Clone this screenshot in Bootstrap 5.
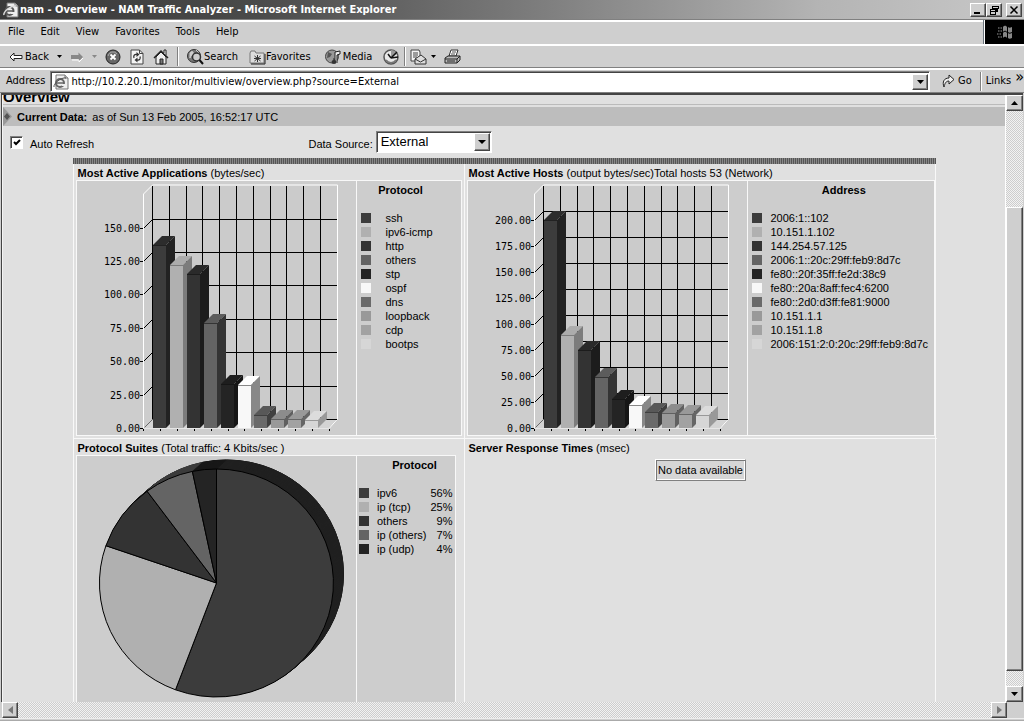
<!DOCTYPE html>
<html lang="en">
<head>
<meta charset="utf-8">
<meta name="viewport" content="width=device-width, initial-scale=1">
<title>nam - Overview - NAM Traffic Analyzer</title>
<link href="https://cdn.jsdelivr.net/npm/bootstrap@5.3.0/dist/css/bootstrap.min.css" rel="stylesheet">
<style>
:root{--face:#cfcfcf;--page:#e0e0e0;--panel:#cdcdcd;--dark:#444;--mid:#808080}
body{font:11px/14px "Liberation Sans",Arial,sans-serif;color:#000;background:var(--face)}
.chrome{font-family:"DejaVu Sans Condensed","DejaVu Sans",sans-serif}
svg{display:block;flex:none}
button,input,select{font:inherit;color:inherit}
.titlebar{height:19px;background:linear-gradient(90deg,#383838,#4a4a4a 25%,#787878 50%,#b4b4b4 80%,#c8c8c8);padding:0 2px 0 3px}
.caption-text{font-weight:700;color:#fff;padding-left:1px}
.raised{background:var(--face);border:1px solid;border-color:#fff var(--dark) var(--dark) #fff;box-shadow:inset -1px -1px 0 var(--mid);padding:0;display:flex;align-items:center;justify-content:center;border-radius:0;flex:none}
.winbtn{width:16px;height:14px}
.strip{border-top:2px solid #fff;border-bottom:1px solid var(--mid)}
.menustrip{height:25px;border-top:1px solid var(--mid);box-shadow:inset 0 2px 0 #fff}
.menustrip a{color:#000;text-decoration:none;padding:0 8px}
.throbber{width:40px;background:#000;border-left:1px solid #fff}
.toolstrip{height:24px;padding-left:5px}
.tool{border:0;background:none;padding:0 4px;height:18px;display:flex;align-items:center;gap:2px;flex:none}
.tool.wide{padding:0 7px}
.tool.snug{gap:0}
.vsep{width:2px;height:19px;background:var(--mid);border-right:1px solid #fff;flex:none}
.addrstrip{height:25px}
.addrstrip label{padding:0 5px 0 6px}
.sunken{background:#fff;border:1px solid;border-color:var(--mid) #fff #fff var(--mid);box-shadow:inset 1px 1px 0 var(--dark)}
.addrbox{height:21px;padding:2px 1px 1px 2px}
.addrbox input{border:0;outline:0;background:none;padding:0 2px;min-width:0}
.viewport{border-top:2px solid var(--dark);border-left:1px solid var(--dark);margin:0 1px}
.doc{background:var(--page);border-left:1px solid #f4f4f4;border-right:1px solid #fff}
.pagehead{font-size:15px;line-height:15px;font-weight:700;margin:-6px 0 0 0;border-bottom:1px solid #bbb;height:16px}
.databar{background:#bdbdbd;height:19px;margin-top:2px;gap:5px}
.controls{height:32px;padding-left:7px}
.controls .refresh{width:30%;gap:7px}
.controls label{padding:4px 3px 0 0}
.tick{appearance:none;width:13px;height:13px;margin:0;border-radius:0}
.tick:checked{background:#fff url("data:image/svg+xml,%3Csvg xmlns='http://www.w3.org/2000/svg' viewBox='0 0 11 11'%3E%3Cpath d='M3 5l2 2 4-4' fill='none' stroke='black' stroke-width='2'/%3E%3C/svg%3E") center/11px}
.source{position:relative;width:116px}
.source select{appearance:none;width:100%;height:22px;padding:0 20px 0 4px;font-size:13px;border-radius:0;outline:0}
.source .raised{position:absolute;right:2px;top:2px;bottom:2px;width:16px;pointer-events:none}
.board{max-width:863px}
.stripes{height:6px;background:repeating-linear-gradient(90deg,#555 0 1px,#888 1px 2px)}
.cells{display:grid;grid-template-columns:391fr 472fr;border-right:1px solid #f8f8f8}
.cell{border-left:1px solid #f8f8f8;padding:0 2px 2px}
.cell.upper{border-bottom:1px solid #f8f8f8}
.cell h2{font-size:11px;line-height:16px;margin:0;padding:1px 0 0 2px;height:16px;font-weight:400;white-space:nowrap}
.plate{background:var(--panel);border:1px solid #f8f8f8}
.plot{border-right:1px solid #f8f8f8;flex:1 1 auto}
.keybox{flex:none;padding-left:4px}
.keybox.apps{width:104px}
.keybox.hosts{width:186px}
.keybox.suites{width:98px;padding:0 2px}
.legend td{height:14px;line-height:14px;padding:0;white-space:nowrap}
.legend th{height:30px;padding:2px 0 0 8px;vertical-align:top;text-align:center;line-height:14px}
.legend.shares th{padding-left:18px}
.swatch{width:10px;height:10px;display:block}
.nodata{border:1px solid;border-color:#fff var(--mid) var(--mid) #fff;box-shadow:inset 1px 1px 0 #777,inset -1px -1px 0 #fff;background:#d6d6d6;padding:3px 2px 3px 2px}
.trough{background:repeating-conic-gradient(#cdcdcd 0 25%,#f2f2f2 0 50%) 0 0/2px 2px}
.vbar{width:17px}.vbar .raised{height:16px}
.vbar .thumb{height:auto;flex:464 1 0}
.hbar{height:16px;margin-left:2px}.hbar .raised{width:16px}
.hbar .corner{width:17px}
.statusedge{height:3px;border-top:1px solid #eee;border-bottom:1px solid #aaa}
.axis{font:10px "DejaVu Sans Mono",monospace;text-anchor:end}
</style>
</head>
<body>
<div class="d-flex flex-column vh-100 overflow-hidden">
<header class="chrome">
  <div class="titlebar d-flex align-items-center">
    <svg width="16" height="16" viewBox="0 0 16 16"><path d="M4 1h8l3 3v11H4z" fill="#eee" stroke="#777"/><path d="M12 1v3h3" fill="#ccc" stroke="#777"/><circle cx="6.500" cy="9" r="4" fill="none" stroke="#555" stroke-width="2"/><path d="M3 9h8" stroke="#555" stroke-width="1.500"/><path d="M8 11h4" stroke="#eee" stroke-width="2"/><path d="M1 13C0 10 8 3 13 4" fill="none" stroke="#ddd" stroke-width="1.500"/></svg>
    <span class="caption-text flex-grow-1 text-nowrap overflow-hidden lh-sm">nam - Overview - NAM Traffic Analyzer - Microsoft Internet Explorer</span>
    <button class="raised winbtn" aria-label="Minimize"><svg width="10" height="10"><path d="M1 8h6" stroke="#000" stroke-width="2"/></svg></button>
    <button class="raised winbtn" aria-label="Restore"><svg width="10" height="10" shape-rendering="crispEdges"><path d="M3 1h6v2H3zM3 1v3M8.500 3v3H7M1 4h6v2H1zM1.500 5v4h5V5" fill="none" stroke="#000"/></svg></button>
    <button class="raised winbtn ms-1" aria-label="Close"><svg width="10" height="10"><path d="M1.500 1.500l7 7M8.500 1.500l-7 7" stroke="#000" stroke-width="1.500"/></svg></button>
  </div>
  <nav class="menustrip d-flex">
    <div class="d-flex align-items-center flex-grow-1 border-end border-secondary"><a href="#">File</a><a href="#">Edit</a><a href="#">View</a><a href="#">Favorites</a><a href="#">Tools</a><a href="#">Help</a></div>
    <div class="throbber d-flex align-items-center justify-content-center"><svg width="18" height="16" viewBox="0 0 18 16"><path d="M7 3c2-2 3-1 4 0v5c-1-1-2-2-4 0zM12 3c1 1 2 1 4 0v5c-2 1-3 1-4 0zM7 9c2-2 3-1 4 0v5c-1-1-2-2-4 0zM12 9c1 1 2 1 4 0v5c-2 1-3 1-4 0z" fill="#888"/><path d="M2 4h4M2 7h4M1 10h5M2 13h4" stroke="#666" stroke-width="1.500" stroke-dasharray="1.500 1"/></svg></div>
  </nav>
  <div class="strip toolstrip d-flex align-items-center">
    <button class="tool"><svg width="14" height="12" viewBox="0 0 14 12"><path d="M1 6l4-4v2.500h8v3H5V10z" fill="#fff" stroke="#222"/></svg>Back</button>
    <button class="tool" aria-label="Back list"><svg width="5" height="3"><path d="M0 0h5L2.500 3z"/></svg></button>
    <button class="tool" aria-label="Forward"><svg width="14" height="12" viewBox="0 0 14 12"><path d="M13 6L8.500 1.500V4H1v4h7.500v2.500z" fill="#888"/><path d="M2 9h7v2l4-4" fill="none" stroke="#fff"/></svg></button>
    <button class="tool" aria-label="Forward list"><svg width="5" height="3"><path d="M0 0h5L2.500 3z" fill="#888"/></svg></button>
    <button class="tool" aria-label="Stop"><svg width="16" height="16" viewBox="0 0 16 16"><circle cx="8" cy="8" r="7" fill="#666" stroke="#222"/><path d="M3 7a5 5 0 0 1 9-2" stroke="#aaa" fill="none"/><path d="M5.500 5.500l5 5M10.500 5.500l-5 5" stroke="#fff" stroke-width="1.800"/></svg></button>
    <button class="tool" aria-label="Refresh"><svg width="16" height="16" viewBox="0 0 16 16"><path d="M2 1h8.500L14 4.500V15H2z" fill="#f4f4f4" stroke="#444"/><path d="M10.500 1v3.500H14" fill="none" stroke="#444"/><path d="M5 9c-1-3 1-4 3-3.500M11 7.500c1 3-1 4-3 3.500" fill="none" stroke="#333" stroke-width="1.300"/><path d="M7.500 3l3 2.500-3 2.500zM8.500 8.500L5.500 11l3 2.500z" fill="#333"/></svg></button>
    <button class="tool" aria-label="Home"><svg width="16" height="16" viewBox="0 0 16 16"><path d="M3 8v7h10V8L8 3z" fill="#eee" stroke="#222"/><path d="M1 9l7-7 7 7" fill="none" stroke="#222" stroke-width="1.500"/><path d="M11 4V1h2v5" fill="#fff" stroke="#222"/><path d="M7 10h3v5H7z" fill="#777" stroke="#222"/></svg></button>
    <div class="vsep mx-1"></div>
    <button class="tool snug"><svg width="17" height="16" viewBox="0 0 17 16"><circle cx="7" cy="7" r="6.500" fill="#777" stroke="#333"/><path d="M3 4c2-3 4-1 3 1s-3 2-3 4zM9 1l3 3" fill="#ccc" stroke="#ccc"/><circle cx="9.500" cy="8" r="4" fill="#ccc" stroke="#333" stroke-width="1.500"/><path d="M12.500 11l3.500 4" stroke="#111" stroke-width="2"/></svg>Search</button>
    <button class="tool wide snug"><svg width="17" height="16" viewBox="0 0 17 16"><path d="M1 14V4l1-2h4l1 2h8v10z" fill="#ddd" stroke="#777"/><path d="M2 15h14V5" fill="none" stroke="#222"/><path d="M8.500 6v7M5.500 7l6 5M11.500 7l-6 5M5 9.500h7" stroke="#333"/></svg>Favorites</button>
    <button class="tool wide snug"><svg width="18" height="16" viewBox="0 0 18 16"><circle cx="7" cy="7.500" r="6.500" fill="#999" stroke="#444"/><path d="M3 3l4 2-2 3-3 1zM8 9l3 1-3 4z" fill="#555"/><path d="M10 13V3l5-1v3l-3 1v8" fill="#eee" stroke="#222"/><ellipse cx="9" cy="13" rx="2.500" ry="2" fill="#333"/></svg>Media</button>
    <button class="tool" aria-label="History"><svg width="17" height="16" viewBox="0 0 17 16"><circle cx="8" cy="8" r="7" fill="#e8e8e8" stroke="#555" stroke-width="1.500"/><path d="M8 8V1a7 7 0 0 1 6 4z" fill="#999"/><path d="M8 9l6-6M8 9l7-1M8 9l-3-4" stroke="#111" stroke-width="1.500"/><path d="M3 11a6 6 0 0 0 10 0" stroke="#777" stroke-width="1.500" fill="none"/></svg></button>
    <div class="vsep"></div>
    <button class="tool" aria-label="Mail"><svg width="17" height="16" viewBox="0 0 17 16"><path d="M1 1h8l1 2v9H1z" fill="#f2f2f2" stroke="#444"/><path d="M3 4h5M3 6h5M3 8h4" stroke="#444"/><path d="M5 10l6-4 5 4v5H5z" fill="#ddd" stroke="#333"/><path d="M5 10l5.500 3L16 10" fill="none" stroke="#333"/></svg></button>
    <button class="tool ps-0" aria-label="Mail list"><svg width="5" height="3"><path d="M0 0h5L2.500 3z"/></svg></button>
    <button class="tool" aria-label="Print"><svg width="17" height="16" viewBox="0 0 17 16"><path d="M5 7l2-6h7l-2 6z" fill="#fff" stroke="#333"/><path d="M8 3h4M7 5h4" stroke="#555"/><path d="M1 9l3-2h12v4l-3 3H1z" fill="#bbb" stroke="#222"/><path d="M1 10h12v4M13 10l3-3M3 12h8" fill="none" stroke="#222"/></svg></button>
  </div>
  <div class="strip addrstrip d-flex align-items-center">
    <label for="address">Address</label>
    <div class="sunken addrbox d-flex align-items-center flex-grow-1">
      <svg width="16" height="16" viewBox="0 0 16 16"><path d="M3 1h9l3 3v11H3z" fill="#eee" stroke="#777"/><path d="M12 1v3h3" fill="#ccc" stroke="#777"/><circle cx="7" cy="9" r="4" fill="none" stroke="#666" stroke-width="2"/><path d="M4 9h7" stroke="#666" stroke-width="1.500"/><path d="M9 11h3" stroke="#eee" stroke-width="2"/><path d="M1 13C0 10 8 3 13 4" fill="none" stroke="#555"/></svg>
      <input id="address" class="flex-grow-1" type="text" value="http://10.2.20.1/monitor/multiview/overview.php?source=External">
      <button class="raised winbtn h-100" aria-label="Show addresses"><svg width="7" height="4"><path d="M0 0h7L3.500 4z"/></svg></button>
    </div>
    <button class="tool px-2 ms-1"><svg width="14" height="16" viewBox="0 0 14 16"><path d="M2 14c-2-5 0-9 5-9V2l5 4.500L7 11V8c-3 0-4 2-5 6z" fill="#eee" stroke="#222"/></svg>Go</button>
    <div class="vsep"></div>
    <a href="#" class="text-black text-decoration-none ps-1">Links</a><span class="fs-6 lh-1 ps-1 pb-2">»</span>
  </div>
</header>

<div class="viewport d-flex flex-grow-1 overflow-hidden">
  <main class="doc flex-grow-1 overflow-hidden">
    <h1 class="pagehead">Overview</h1>
    <div class="databar d-flex align-items-center"><svg width="9" height="19"><path d="M0 0l9 9.500L0 19z" fill="#999"/><path d="M1 9.500L4 6l3 3.500L4 13z" fill="#555"/></svg><b>Current Data:</b><span>as of Sun 13 Feb 2005, 16:52:17 UTC</span></div>
    <form class="controls d-flex align-items-center">
      <div class="refresh d-flex align-items-center"><input class="tick sunken" type="checkbox" id="auto" checked><label for="auto">Auto Refresh</label></div>
      <label for="source">Data Source:</label>
      <div class="source"><select id="source" class="sunken"><option>External</option></select><span class="raised"><svg width="8" height="4"><path d="M0 0h8L4 4z"/></svg></span></div>
    </form>
    <div class="board mx-auto">
      <div class="stripes"></div>
      <div class="cells">
        <section class="cell upper">
          <h2><b>Most Active Applications</b> (bytes/sec)</h2>
          <div class="plate d-flex"><div class="plot"><svg id="apps" width="279" height="254" viewBox="76 181 279 254"></svg></div>
            <div class="keybox apps"><table class="legend"><thead><tr><th colspan="2">Protocol</th></tr></thead><tbody id="appsKey"></tbody></table></div></div>
        </section>
        <section class="cell upper">
          <h2><b>Most Active Hosts</b> (output bytes/sec)Total hosts 53 (Network)</h2>
          <div class="plate d-flex"><div class="plot"><svg id="hosts" width="279" height="254" viewBox="76 181 279 254"></svg></div>
            <div class="keybox hosts"><table class="legend"><thead><tr><th colspan="2">Address</th></tr></thead><tbody id="hostsKey"></tbody></table></div></div>
        </section>
        <section class="cell">
          <h2><b>Protocol Suites</b> (Total traffic: 4 Kbits/sec )</h2>
          <div class="plate d-inline-flex"><div class="plot"><svg id="suites" width="279" height="254" viewBox="76 456 279 254"></svg></div>
            <div class="keybox suites"><table class="legend shares w-100"><thead><tr><th colspan="3">Protocol</th></tr></thead><tbody id="suitesKey"></tbody></table></div></div>
        </section>
        <section class="cell">
          <h2><b>Server Response Times</b> (msec)</h2>
          <div class="d-flex justify-content-center pt-1"><span class="nodata">No data available</span></div>
        </section>
      </div>
    </div>
  </main>
  <div class="vbar d-flex flex-column">
    <button class="raised" aria-label="Scroll up"><svg width="7" height="4"><path d="M0 4h7L3.500 0z"/></svg></button>
    <div class="trough" style="flex:96 1 0"></div><div class="raised thumb"></div><div class="trough" style="flex:15 1 0"></div>
    <button class="raised" aria-label="Scroll down"><svg width="7" height="4"><path d="M0 0h7L3.500 4z"/></svg></button>
  </div>
</div>
<div class="hbar d-flex flex-shrink-0">
  <button class="raised" aria-label="Scroll left"><svg width="5" height="8"><path d="M5 0v8L0 4z" fill="#777"/></svg></button>
  <div class="trough flex-grow-1"></div>
  <button class="raised" aria-label="Scroll right"><svg width="5" height="8"><path d="M0 0v8l5-4z" fill="#777"/></svg></button>
  <div class="corner"></div>
</div>
<div class="statusedge flex-shrink-0"></div>
</div>
<script src="https://cdn.jsdelivr.net/npm/bootstrap@5.3.0/dist/js/bootstrap.bundle.min.js"></script>
<script>
const shades = [ // front, side, top
  ['#3c3c3c','#222','#2c2c2c'],['#b0b0b0','#7c7c7c','#acacac'],['#333','#1c1c1c','#2a2a2a'],['#646464','#343434','#5c5c5c'],
  ['#242424','#161616','#1e1e1e'],['#f8f8f8','#888','#fff'],['#6a6a6a','#404040','#585858'],['#999','#606060','#8c8c8c'],
  ['#a2a2a2','#666','#999'],['#d6d6d6','#999','#dcdcdc']];
const X = 142, B = 428, D = 9, T = 185, R = 336;

function barChart(id, step, count, tops) {
  let s = `<rect x="151" y="${T}" width="185" height="234" fill="#cbcbcb"/>`;
  s += `<g stroke="#000" shape-rendering="crispEdges" fill="none">`;
  for (let i = 0; i < 11; i++) { const x = 151.5 + Math.round(i * 16.8); s += `<path d="M${x} ${T + 1}V419"/>`; }
  for (let i = 0; i <= count; i++) {
    const y = Math.round(B - i * step) + .5;
    s += `<path d="M151 ${y - D}H${R}M139 ${y}H${X}"/><path shape-rendering="auto" d="M${X + .5} ${y}l${D} -${D}"/>`;
  }
  for (let i = 0; i < 12; i++) s += `<path d="M${142.5 + Math.round(i * 16.9)} 429v2"/>`;
  s += `</g><path d="M142.500 428.500V194l9-9H336.500V419l-8 9H142" fill="none" stroke="#fff"/><path d="M143 428l9-9H336l-8 9z" fill="#d4d4d4"/><path d="M320 419.500h16" stroke="#000"/>`;
  tops.forEach((y, i) => {
    const x = 152 + Math.round(i * 16.9), w = 13, [f, sd, tp] = shades[i];
    s += `<path d="M${x} ${y}l${D} -${D}h${w}l-${D} ${D}z" fill="${tp}"/><path d="M${x + w} ${y}l${D} -${D}V${B - D}L${x + w} ${B}z" fill="${sd}"/>` +
      `<path d="M${x} ${y}h${w}V${B}h-${w}z" fill="${f}"/><path d="M${x} ${y + .5}h${w}" stroke="${sd}"/>`;
  });
  for (let i = 0; i <= count; i++) s += `<text class="axis" x="139" y="${Math.round(B - i * step) + 4}">${(i * 25).toFixed(2)}</text>`;
  document.getElementById(id).innerHTML = s;
}
barChart('apps', 33.4, 6, [245, 265, 274, 323, 384, 385, 415, 419, 419, 420]);
barChart('hosts', 26, 8, [220, 335, 350, 377, 399, 405, 412, 413, 414, 415]);

function key(id, names, textPad, shares) {
  document.getElementById(id).innerHTML = names.map((n, i) =>
    `<tr><td><span class="swatch" style="background:${shades[i][0]}"></span></td><td style="padding-left:${textPad}px">${n}</td>` +
    (shares ? `<td class="text-end">${shares[i]}%</td>` : '') + '</tr>').join('');
}
key('appsKey', ['ssh','ipv6-icmp','http','others','stp','ospf','dns','loopback','cdp','bootps'], 15);
key('hostsKey', ['2006:1::102','10.151.1.102','144.254.57.125','2006:1::20c:29ff:feb9:8d7c','fe80::20f:35ff:fe2d:38c9','fe80::20a:8aff:fec4:6200','fe80::2d0:d3ff:fe81:9000','10.151.1.1','10.151.1.8','2006:151:2:0:20c:29ff:feb9:8d7c'], 9);
key('suitesKey', ['ipv6','ip (tcp)','others','ip (others)','ip (udp)'], 8, [56, 25, 9, 7, 4]);

const ends = [0, .557, .803, .899, .967, 1], sides = ['#202020','#8c8c8c','#262626','#3c3c3c','#181818'];
function slice(i, dx, dy, attrs) {
  const cx = 215.5 + dx, cy = 583 + dy, rx = 117, ry = 114;
  const p = f => `${(cx + rx * Math.sin(f * 2 * Math.PI)).toFixed(1)} ${(cy - ry * Math.cos(f * 2 * Math.PI)).toFixed(1)}`;
  return `<path d="M${cx} ${cy}L${p(ends[i])}A${rx} ${ry} 0 ${ends[i + 1] - ends[i] > .5 ? 1 : 0} 1 ${p(ends[i + 1])}z" ${attrs}/>`;
}
let pie = '<ellipse cx="225.500" cy="574" rx="117" ry="114" fill="#222" stroke="#000"/>';
for (let k = 10; k > 0; k--) for (let i = 0; i < 5; i++) pie += slice(i, k, -k * .9, `fill="${sides[i]}" stroke="${sides[i]}"`);
for (let i = 0; i < 5; i++) pie += slice(i, 0, 0, `fill="${shades[i][0]}" stroke="#000" stroke-width="1"`);
document.getElementById('suites').innerHTML = pie;
</script>
</body>
</html>
